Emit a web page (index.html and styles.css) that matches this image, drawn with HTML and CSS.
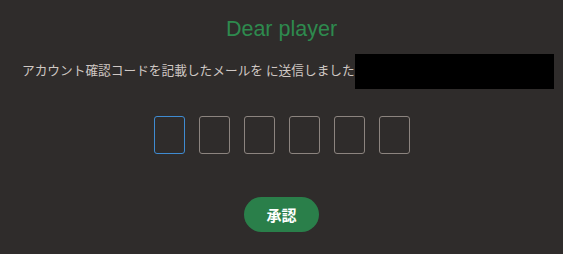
FILE: index.html
```html
<!DOCTYPE html>
<html lang="ja">
<head>
<meta charset="utf-8">
<title>Dear player</title>
<link rel="stylesheet" href="styles.css">
</head>
<body>
<main class="verify">
  <h1 class="verify-title">Dear player</h1>
  <div class="verify-message">
    <span class="verify-text">アカウント確認コードを記載したメールを に送信しました</span>
    <span class="verify-mail"></span>
  </div>
  <div class="code-row">
    <input class="code-box is-active" type="text" maxlength="1">
    <input class="code-box" type="text" maxlength="1">
    <input class="code-box" type="text" maxlength="1">
    <input class="code-box" type="text" maxlength="1">
    <input class="code-box" type="text" maxlength="1">
    <input class="code-box" type="text" maxlength="1">
  </div>
  <div class="verify-actions">
    <button class="verify-btn" type="button">承認</button>
  </div>
</main>
</body>
</html>
```

FILE: styles.css
```css
html, body {
  margin: 0;
  padding: 0;
  background: #2f2c2b;
  height: 100%;
}

.verify {
  display: flex;
  flex-direction: column;
  padding: 16px 0 0 0;
}

.verify-title {
  margin: 0;
  font-family: "Liberation Sans", Arial, sans-serif;
  font-weight: normal;
  font-size: 21.5px;
  line-height: 26px;
  color: #2e8a4e;
  text-align: center;
}

.verify-message {
  display: flex;
  align-items: center;
  margin-top: 12px;
  padding-left: 22px;
  height: 35px;
}

.verify-text {
  font-family: "Noto Sans CJK JP", sans-serif;
  font-size: 12.7px;
  line-height: 18px;
  color: #cfc8c4;
  white-space: nowrap;
  margin-bottom: 3px;
}

.verify-mail {
  display: block;
  width: 199px;
  height: 35px;
  background: #000;
  flex-shrink: 0;
}

.code-row {
  display: flex;
  justify-content: center;
  gap: 14px;
  margin-top: 27px;
}

.code-box {
  box-sizing: border-box;
  width: 31px;
  height: 38px;
  margin: 0;
  padding: 0;
  border: 1px solid #8c847f;
  border-radius: 3px;
  background: transparent;
  color: #e8e2de;
  font-family: "Liberation Sans", Arial, sans-serif;
  font-size: 18px;
  text-align: center;
  outline: none;
}

.code-box.is-active {
  border-color: #3f8bd1;
}

.verify-actions {
  display: flex;
  justify-content: center;
  margin-top: 43px;
}

.verify-btn {
  box-sizing: border-box;
  width: 75px;
  height: 35px;
  padding: 0;
  border: none;
  border-radius: 18px;
  background: #2a7f4a;
  color: #ffffff;
  font-family: "Noto Sans CJK JP", sans-serif;
  font-weight: bold;
  font-size: 15px;
  line-height: 35px;
  cursor: pointer;
}
```
